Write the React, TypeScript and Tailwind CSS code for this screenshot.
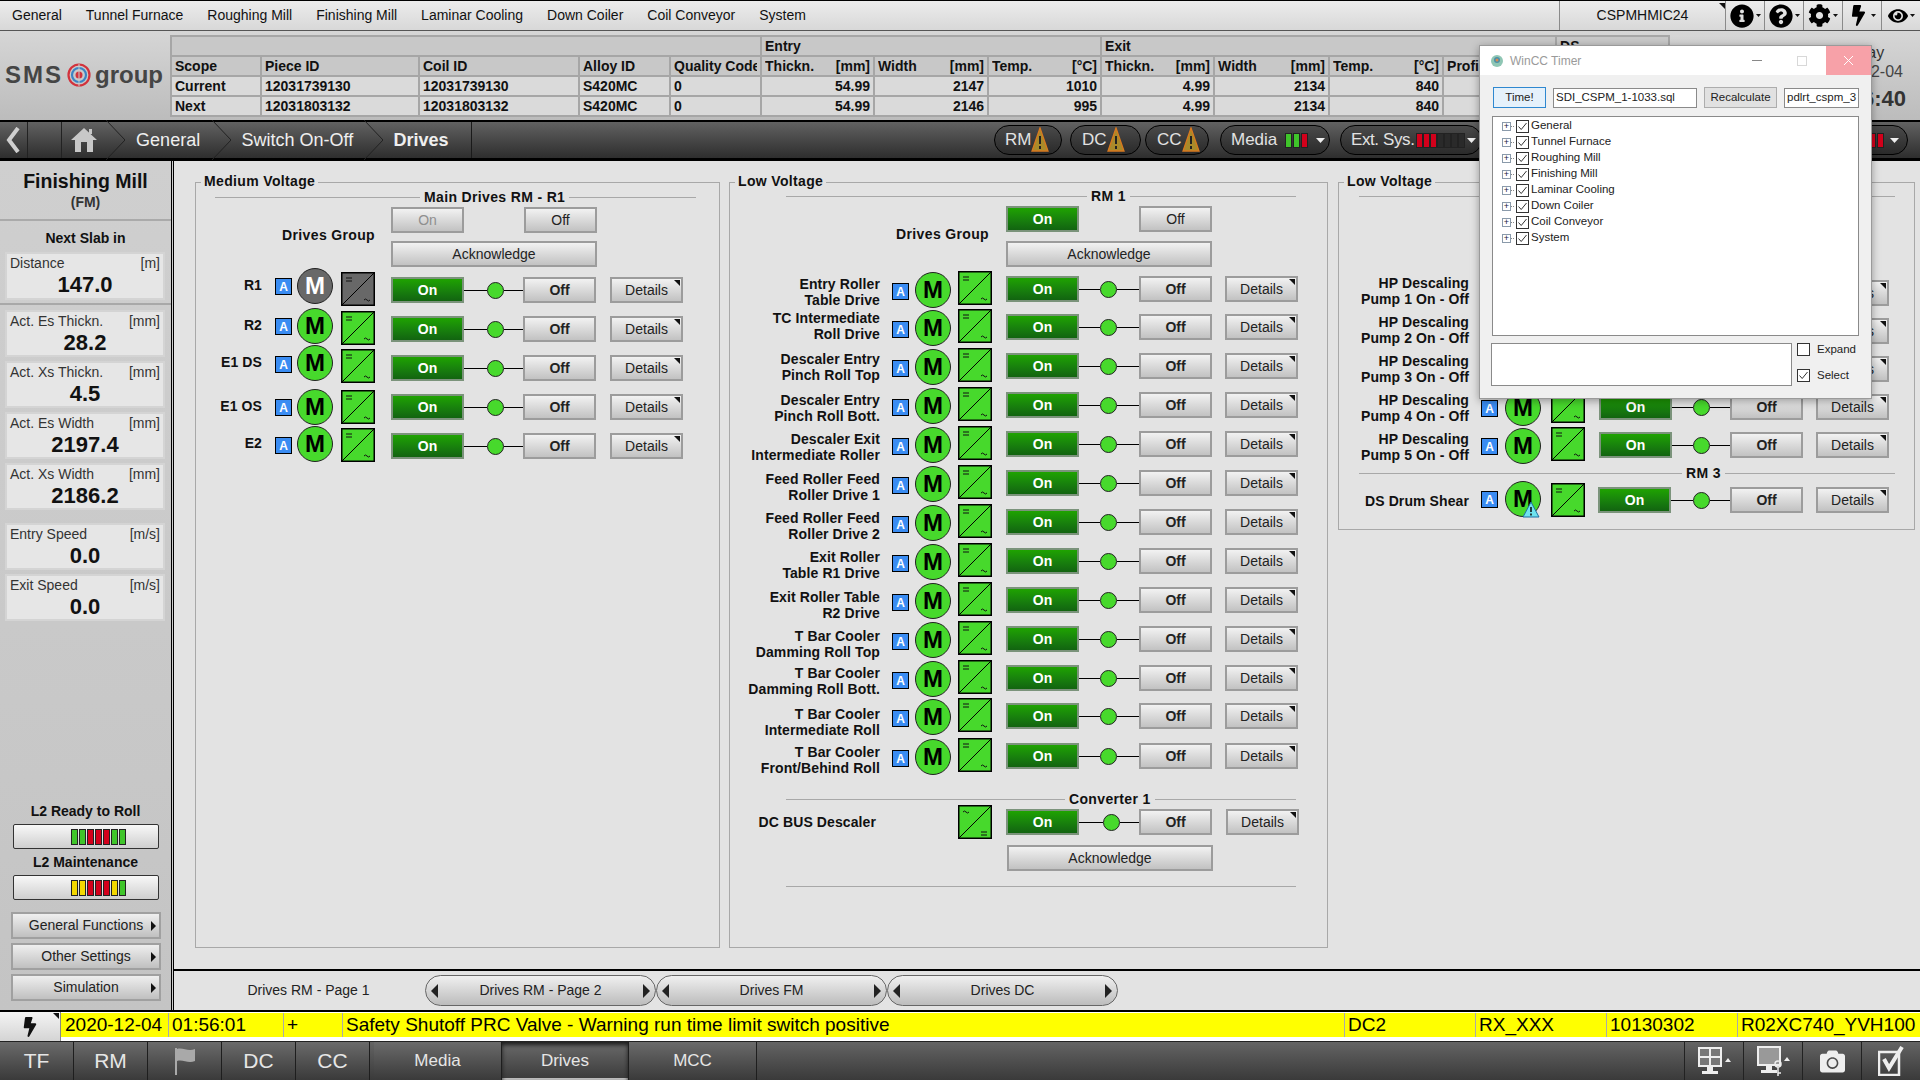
import React from "react";
import { FaInfoCircle, FaQuestionCircle, FaCog, FaBolt, FaEye, FaCamera } from "react-icons/fa";

const Btn = ({ cls = "", children }: { cls?: string; children?: React.ReactNode }) => (
  <div className={`relative flex items-center justify-center h-[26px] border-2 border-[#9c9c9c] bg-gradient-to-b from-[#f2f2f2] to-[#c2c2c2] text-[14px] text-[#222] ${cls}`}>
    {children}
  </div>
);

const OnBtn = ({ cls = "" }: { cls?: string }) => (
  <div className={`flex items-center justify-center w-[73px] h-[26px] border-2 border-[#7b937b] bg-gradient-to-b from-[#1fa300] to-[#126410] text-white font-bold text-[14px] ${cls}`}>
    On
  </div>
);

const Corner = () => (
  <svg className="absolute right-[1px] top-[1px]" width="7" height="7" viewBox="0 0 7 7">
    <path d="M1 0H7V6Z" fill="#111" />
  </svg>
);

const Motor = ({ gray, warn }: { gray?: boolean; warn?: boolean }) => (
  <div className={`relative w-[36px] h-[36px] rounded-full border-[1.5px] border-[#222] flex items-center justify-center font-bold text-[24px] leading-none ${gray ? "bg-[#686868] text-white" : "bg-[#47d92c] text-black"}`}>
    M
    {warn && (
      <svg className="absolute right-[0px] bottom-[-2px]" width="18" height="17" viewBox="0 0 18 17">
        <path d="M9 1L17 16H1Z" fill="#6fe3ee" stroke="#1c6fa5" strokeWidth="1" />
        <path d="M9 6V11M9 12.5V14.5" stroke="#111" strokeWidth="1.6" />
      </svg>
    )}
  </div>
);

const Conv = ({ gray, flip }: { gray?: boolean; flip?: boolean }) => (
  <svg width="34" height="34" viewBox="0 0 34 34" className="block shrink-0">
    <rect x="0.75" y="0.75" width="32.5" height="32.5" fill={gray ? "#686868" : "#47d92c"} stroke="#000" strokeWidth="1.5" />
    <path d="M1 33L33 1" stroke="#000" strokeWidth="1" />
    {flip ? (
      <>
        <path d="M5 7q1.500 -2 3 0t3 0" fill="none" stroke="#111" strokeWidth="1" />
        <path d="M23 27H29M23 30H29" stroke="#111" strokeWidth="1" />
      </>
    ) : (
      <>
        <path d="M5 6H11M5 9H11" stroke="#111" strokeWidth="1" />
        <path d="M23 28q1.500 -2 3 0t3 0" fill="none" stroke="#111" strokeWidth="1" />
      </>
    )}
  </svg>
);

const ABadge = () => (
  <div className="w-[17px] h-[17px] bg-[#3a8cf2] border border-black text-white font-bold text-[12px] flex items-center justify-center leading-none">A</div>
);

type RowP = {
  label?: React.ReactNode;
  rowH?: string;
  lw: string; aMl: string; mMl: string; cMl: string; onMl: string; dMl: string;
  connW: string; lead: string;
  lT?: string; aT?: string; mT?: string; cT?: string;
  gray?: boolean; warn?: boolean; noMotor?: boolean; flip?: boolean;
};

const Row = ({ label, rowH = "h-[39px]", lw, aMl, mMl, cMl, onMl, dMl, connW, lead, lT = "mt-[8px]", aT = "mt-[17px]", mT = "mt-[6px]", cT = "mt-[5px]", gray, warn, noMotor, flip }: RowP) => (
  <div className={`flex items-start shrink-0 ${rowH}`}>
    <div className={`${lw} ${lT} text-right font-bold text-[14px] leading-[16px] tracking-[0.1px] text-[#111] shrink-0 whitespace-nowrap`}>{label}</div>
    {noMotor ? (
      <div className={`${cMl} ${cT}`}><Conv flip={flip} /></div>
    ) : (
      <>
        <div className={`${aMl} ${aT}`}><ABadge /></div>
        <div className={`${mMl} ${mT}`}><Motor gray={gray} warn={warn} /></div>
        <div className={`${cMl} ${cT}`}><Conv gray={gray} /></div>
      </>
    )}
    <OnBtn cls={`${onMl} mt-[10px] shrink-0`} />
    <div className={`${connW} h-[26px] mt-[10px] flex items-center shrink-0`}>
      <div className={`${lead} h-px bg-black`} />
      <div className="w-[17px] h-[17px] rounded-full bg-[#47d92c] border border-[#222] shrink-0" />
      <div className="flex-1 h-px bg-black" />
    </div>
    <Btn cls="w-[73px] mt-[10px] font-bold shrink-0">Off</Btn>
    <Btn cls={`w-[73px] ${dMl} mt-[10px] shrink-0`}>Details<Corner /></Btn>
  </div>
);

const Heading = ({ text, cls, lead }: { text: string; cls: string; lead: string }) => (
  <div className={`flex items-center h-[16px] shrink-0 ${cls}`}>
    <div className={`${lead} h-px bg-[#a8a8a8] shrink-0`} />
    <div className="px-[4px] font-bold text-[14px] tracking-[0.35px] text-[#111] whitespace-nowrap">{text}</div>
    <div className="flex-1 h-px bg-[#a8a8a8]" />
  </div>
);

const Legend = ({ text }: { text: string }) => (
  <div className="-mt-[12px] h-[20px] ml-[5px] shrink-0 flex">
    <div className="bg-[#e3e3e3] px-[3px] font-bold text-[14px] tracking-[0.35px] leading-[20px] text-[#111]">{text}</div>
  </div>
);

const b1 = { lw: "w-[66px]", aMl: "ml-[13px]", mMl: "ml-[5px]", cMl: "ml-[8px]", onMl: "ml-[16px]", dMl: "ml-[14px]", connW: "w-[59px]", lead: "w-[23px]" };
const b2 = { lw: "w-[150px]", aMl: "ml-[12px]", mMl: "ml-[6px]", cMl: "ml-[7px]", onMl: "ml-[14px]", dMl: "ml-[13px]", connW: "w-[60px]", lead: "w-[21px]" };
const b3 = { lw: "w-[130px]", aMl: "ml-[12px]", mMl: "ml-[7px]", cMl: "ml-[10px]", onMl: "ml-[14px]", dMl: "ml-[13px]", connW: "w-[58px]", lead: "w-[21px]" };

const lines = (a: string, b: string) => (<>{a}<br />{b}</>);

const rows1 = [
  { label: "R1", gray: true, rowH: "h-[39px]", lT: "mt-[10px]", mT: "mt-[1px]", cT: "mt-[5px]", aT: "mt-[11px]" },
  { label: "R2", rowH: "h-[39px]", lT: "mt-[11px]", mT: "mt-[2px]", cT: "mt-[5px]", aT: "mt-[12px]" },
  { label: "E1 DS", rowH: "h-[39px]", lT: "mt-[9px]", mT: "mt-[0px]", cT: "mt-[4px]", aT: "mt-[11px]" },
  { label: "E1 OS", rowH: "h-[39px]", lT: "mt-[14px]", mT: "mt-[5px]", cT: "mt-[6px]", aT: "mt-[15px]" },
  { label: "E2", rowH: "h-[39px]", lT: "mt-[12px]", mT: "mt-[3px]", cT: "mt-[5px]", aT: "mt-[14px]" },
];

const rows2 = [
  { label: lines("Entry Roller", "Table Drive"), rowH: "h-[38px]", lT: "mt-[10px]" },
  { label: lines("TC Intermediate", "Roll Drive"), rowH: "h-[39px]", lT: "mt-[6px]" },
  { label: lines("Descaler Entry", "Pinch Roll Top"), rowH: "h-[39px]", lT: "mt-[8px]" },
  { label: lines("Descaler Entry", "Pinch Roll Bott."), rowH: "h-[39px]", lT: "mt-[10px]" },
  { label: lines("Descaler Exit", "Intermediate Roller"), rowH: "h-[39px]", lT: "mt-[10px]" },
  { label: lines("Feed Roller Feed", "Roller Drive 1"), rowH: "h-[39px]", lT: "mt-[11px]" },
  { label: lines("Feed Roller Feed", "Roller Drive 2"), rowH: "h-[39px]", lT: "mt-[11px]" },
  { label: lines("Exit Roller", "Table R1 Drive"), rowH: "h-[39px]", lT: "mt-[11px]" },
  { label: lines("Exit Roller Table", "R2 Drive"), rowH: "h-[39px]", lT: "mt-[12px]" },
  { label: lines("T Bar Cooler", "Damming Roll Top"), rowH: "h-[39px]", lT: "mt-[12px]" },
  { label: lines("T Bar Cooler", "Damming Roll Bott."), rowH: "h-[38px]", lT: "mt-[10px]" },
  { label: lines("T Bar Cooler", "Intermediate Roll"), rowH: "h-[40px]", lT: "mt-[13px]" },
  { label: lines("T Bar Cooler", "Front/Behind Roll"), rowH: "h-[39px]", lT: "mt-[11px]" },
];

const pumps = [
  { n: 1, lT: "mt-[5px]" },
  { n: 2, lT: "mt-[6px]" },
  { n: 3, lT: "mt-[7px]" },
  { n: 4, lT: "mt-[8px]" },
  { n: 5, lT: "mt-[9px]" },
];

const StatBox = ({ label, unit, value, cls = "" }: { label: string; unit: string; value: string; cls?: string }) => (
  <div className={`mx-[5px] w-[160px] h-[47px] border-2 border-[#d4d4d4] bg-[#e6e6e6] px-[3px] flex flex-col shrink-0 ${cls}`}>
    <div className="flex justify-between text-[14px] leading-[18px] text-[#333]"><span>{label}</span><span>{unit}</span></div>
    <div className="text-center font-bold text-[22px] leading-[25px] text-[#111]">{value}</div>
  </div>
);

const Leds = ({ colors, w = "w-[7px]", h = "h-[16px]", gap = "gap-[1px]" }: { colors: string[]; w?: string; h?: string; gap?: string }) => (
  <div className={`flex shrink-0 ${gap}`}>
    {colors.map((c, i) => (
      <div key={i} className={`${w} ${h} ${c} border border-[#222]`} />
    ))}
  </div>
);
const G = "bg-[#3fc52a]", R = "bg-[#d3001b]", Y = "bg-[#f4d800]", K = "bg-[#2a2a2a]";

const SideBtn = ({ text }: { text: string }) => (
  <div className="relative mx-[11px] w-[150px] h-[27px] border-2 border-[#a0a0a0] bg-gradient-to-b from-[#efefef] to-[#c0c0c0] flex items-center justify-center text-[14px] text-[#222] shrink-0">
    {text}
    <svg className="absolute right-[3px] top-[7px]" width="5" height="10" viewBox="0 0 5 10"><path d="M0 0L5 5L0 10Z" fill="#111" /></svg>
  </div>
);

const Warn = () => (
  <svg width="18" height="26" viewBox="0 0 18 26" className="block shrink-0">
    <path d="M9 1L17 24H1Z" fill="#a98a2a" stroke="#d9791f" strokeWidth="1.300" />
    <path d="M9 9V17M9 19V22" stroke="#222" strokeWidth="2" />
  </svg>
);

const Caret = () => (
  <svg width="9" height="5" viewBox="0 0 9 5" className="shrink-0"><path d="M0 0H9L4.500 5Z" fill="#eee" /></svg>
);

const Pill = ({ cls, children }: { cls: string; children: React.ReactNode }) => (
  <div className={`h-[30px] rounded-full border border-black bg-gradient-to-b from-[#4a4a4a] to-[#2a2a2a] flex items-center whitespace-nowrap text-[17px] text-[#e2e2e2] shrink-0 ${cls}`}>
    {children}
  </div>
);

const Chev = () => (
  <svg width="19" height="40" viewBox="0 0 19 40" className="block shrink-0">
    <path d="M0 0L19 20L0 40" fill="none" stroke="#222" strokeWidth="1" />
  </svg>
);

const TopIcon = ({ children }: { children: React.ReactNode }) => (
  <div className="relative w-[39px] h-full border-l border-[#8a8a8a] flex items-center justify-center gap-[2px] text-black shrink-0">
    {children}
    <svg width="5" height="3" viewBox="0 0 5 3"><path d="M0 0H5L2.500 3Z" fill="#111" /></svg>
  </div>
);

const PageTab = ({ text, cls = "" }: { text: string; cls?: string }) => (
  <div className={`h-[31px] w-[231px] rounded-full border border-[#666] bg-gradient-to-b from-[#f0f0f0] to-[#bcbcbc] flex items-center justify-between px-[5px] text-[14px] text-[#222] shrink-0 ${cls}`}>
    <svg width="7" height="14" viewBox="0 0 7 14"><path d="M7 0V14L0 7Z" fill="#222" /></svg>
    {text}
    <svg width="7" height="14" viewBox="0 0 7 14"><path d="M0 0V14L7 7Z" fill="#222" /></svg>
  </div>
);

const BottomTab = ({ children, cls = "" }: { children: React.ReactNode; cls?: string }) => (
  <div className={`h-full flex items-center justify-center text-[#e6e6e6] bg-gradient-to-b from-[#6b6b6b] to-[#3a3a3a] border-r border-[#1e1e1e] shrink-0 ${cls}`}>
    {children}
  </div>
);

const Th = ({ a, b, span = 1 }: { a: string; b?: string; span?: number }) => (
  <th colSpan={span} className="border-2 border-[#a6a6a6] bg-[#c8c8c8] px-[3px] py-0 font-bold text-[14px] leading-[16px] text-[#111] h-[20px] overflow-hidden whitespace-nowrap text-left">
    <div className="flex justify-between overflow-hidden"><span>{a}</span>{b && <span>{b}</span>}</div>
  </th>
);
const Td = ({ v, right }: { v: string; right?: boolean }) => (
  <td className={`border-2 border-[#a6a6a6] bg-[#dadada] px-[3px] py-0 font-bold text-[14px] leading-[16px] text-[#111] h-[20px] whitespace-nowrap ${right ? "text-right" : "text-left"}`}>{v}</td>
);

const colW = ["w-[90px]", "w-[158px]", "w-[160px]", "w-[91px]", "w-[91px]", "w-[113px]", "w-[114px]", "w-[113px]", "w-[113px]", "w-[115px]", "w-[114px]", "w-[113px]", "w-[113px]"];

const tree = ["General", "Tunnel Furnace", "Roughing Mill", "Finishing Mill", "Laminar Cooling", "Down Coiler", "Coil Conveyor", "System"];

const Check = ({ on = true }: { on?: boolean }) => (
  <svg width="13" height="13" viewBox="0 0 13 13" className="block shrink-0">
    <rect x="0.500" y="0.500" width="12" height="12" fill="#fff" stroke="#333" />
    {on && <path d="M2.500 6.500L5.200 9.500L10.500 3" fill="none" stroke="#333" strokeWidth="1" />}
  </svg>
);

export default function App() {
  return (
    <div className="relative w-[1920px] h-[1080px] overflow-hidden flex flex-col bg-[#e3e3e3] font-['Liberation_Sans',Arial,sans-serif]">
      {/* top menu */}
      <div className="h-[31px] shrink-0 border-t border-black border-b border-b-[#555] bg-gradient-to-b from-[#ececec] to-[#d8d8d8] flex items-center text-[14px] text-[#111]">
        <div className="flex w-[1559px] pl-[12px] gap-[24px] shrink-0 whitespace-nowrap">
          {["General", "Tunnel Furnace", "Roughing Mill", "Finishing Mill", "Laminar Cooling", "Down Coiler", "Coil Conveyor", "System"].map((t) => <span key={t}>{t}</span>)}
        </div>
        <div className="relative w-[166px] h-full border-l border-[#8a8a8a] flex items-center justify-center shrink-0">
          CSPMHMIC24
          <svg className="absolute right-0 top-[2px]" width="6" height="6" viewBox="0 0 6 6"><path d="M0 0H6V6Z" fill="#111" /></svg>
        </div>
        <TopIcon><FaInfoCircle size={24} /></TopIcon>
        <TopIcon><FaQuestionCircle size={24} /></TopIcon>
        <TopIcon><FaCog size={23} /></TopIcon>
        <TopIcon><FaBolt size={21} /></TopIcon>
        <TopIcon><FaEye size={20} /></TopIcon>
      </div>

      {/* header */}
      <div className="h-[89px] shrink-0 flex bg-gradient-to-b from-[#d6d6d6] to-[#bcbcbc]">
        <div className="w-[170px] shrink-0 pl-[5px] flex items-center h-[88px] gap-[4px] font-bold text-[#454545] text-[24px]">
          <span className="tracking-[2px] leading-none">SMS</span>
          <svg width="24" height="24" viewBox="0 0 24 24" className="shrink-0">
            <circle cx="12" cy="12" r="10.500" fill="none" stroke="#d2323c" strokeWidth="2.200" />
            <circle cx="12" cy="12" r="7" fill="none" stroke="#3b84c4" strokeWidth="2.200" />
            <circle cx="12" cy="12" r="3.500" fill="#d2323c" />
            <path d="M12 1V23" stroke="#c8c8c8" strokeWidth="1" />
          </svg>
          <span className="leading-none">group</span>
        </div>
        <div className="mt-[4px] shrink-0">
          <table className="table-fixed border-collapse w-[1498px]">
            <colgroup>{colW.map((w, i) => <col key={i} className={w} />)}</colgroup>
            <tbody>
              <tr>
                <Th a="" span={5} />
                <Th a="Entry" span={3} />
                <Th a="Exit" span={4} />
                <Th a="DS" />
              </tr>
              <tr>
                <Th a="Scope" /><Th a="Piece ID" /><Th a="Coil ID" /><Th a="Alloy ID" /><Th a="Quality Code" />
                <Th a="Thickn." b="[mm]" /><Th a="Width" b="[mm]" /><Th a="Temp." b="[°C]" />
                <Th a="Thickn." b="[mm]" /><Th a="Width" b="[mm]" /><Th a="Temp." b="[°C]" /><Th a="Profile" /><Th a="" />
              </tr>
              <tr>
                <Td v="Current" /><Td v="12031739130" /><Td v="12031739130" /><Td v="S420MC" /><Td v="0" />
                <Td v="54.99" right /><Td v="2147" right /><Td v="1010" right /><Td v="4.99" right /><Td v="2134" right /><Td v="840" right /><Td v="" /><Td v="" />
              </tr>
              <tr>
                <Td v="Next" /><Td v="12031803132" /><Td v="12031803132" /><Td v="S420MC" /><Td v="0" />
                <Td v="54.99" right /><Td v="2146" right /><Td v="995" right /><Td v="4.99" right /><Td v="2134" right /><Td v="840" right /><Td v="" /><Td v="" />
              </tr>
            </tbody>
          </table>
        </div>
        <div className="w-[120px] ml-[132px] shrink-0 flex flex-col items-center text-[#333] pt-[12px] whitespace-nowrap">
          <div className="text-[16px] leading-[20px]">Friday</div>
          <div className="text-[16px] leading-[18px] text-[#444]">2020-12-04</div>
          <div className="text-[22px] leading-[30px] mt-[3px] font-bold">01:56:40</div>
        </div>
      </div>

      {/* breadcrumb */}
      <div className="h-[41px] shrink-0 border-t-2 border-b-[3px] border-black bg-gradient-to-b from-[#626262] to-[#2e2e2e] flex items-center">
        <div className="w-[472px] h-full flex items-center border-r border-[#1a1a1a] text-[18px] text-[#efefef] shrink-0">
          <div className="w-[28px] h-full flex items-center justify-center border-r border-[#222]">
            <svg width="14" height="26" viewBox="0 0 14 26"><path d="M12 1L3 13L12 25" fill="none" stroke="#cfcfcf" strokeWidth="4" /></svg>
          </div>
          <div className="w-[34px] h-full border-r border-[#222]" />
          <div className="w-[44px] h-full flex items-center justify-center">
            <svg width="26" height="26" viewBox="0 0 26 26">
              <path d="M13 1L26 13H22V25H16V15H10V25H4V13H0Z" fill="#c8c8c8" />
              <path d="M18 2H21V7H18Z" fill="#c8c8c8" />
            </svg>
          </div>
          <Chev />
          <div className="w-[87px] text-center">General</div>
          <Chev />
          <div className="w-[134px] text-center">Switch On-Off</div>
          <Chev />
          <div className="w-[88px] pr-[12px] text-center font-bold">Drives</div>
        </div>
        <div className="flex items-center ml-[522px]">
          <Pill cls="w-[68px] pl-[10px]">RM<Warn /></Pill>
          <Pill cls="w-[71px] pl-[11px] ml-[8px]">DC<Warn /></Pill>
          <Pill cls="w-[64px] pl-[11px] ml-[4px]">CC<Warn /></Pill>
          <Pill cls="w-[110px] pl-[10px] ml-[11px] gap-[8px]">Media<Leds colors={[G, G, R]} w="w-[7px]" h="h-[15px]" /><Caret /></Pill>
          <Pill cls="w-[142px] pl-[10px] ml-[10px] gap-[2px] tracking-[-0.4px]">Ext. Sys.<Leds colors={[R, R, R, K, K, K, K]} w="w-[7px]" h="h-[15px]" gap="gap-0" /><Caret /></Pill>
          <Pill cls="w-[418px] pr-[8px] ml-[8px] justify-end gap-[6px]"><Leds colors={[R, R]} w="w-[7px]" h="h-[15px]" /><Caret /></Pill>
        </div>
      </div>

      {/* middle */}
      <div className="h-[849px] shrink-0 flex">
        <div className="w-[171px] h-full shrink-0 flex flex-col bg-gradient-to-b from-[#cfcfcf] to-[#c4c4c4] text-[#111]">
          <div className="h-[60px] shrink-0 border-b-2 border-[#aaaaaa] flex flex-col items-center pt-[8px]">
            <div className="font-bold text-[19.5px] leading-[24px]">Finishing Mill</div>
            <div className="font-bold text-[14px] leading-[18px] text-[#333]">(FM)</div>
          </div>
          <div className="h-[31px] pt-[3px] shrink-0 flex items-center justify-center font-bold text-[14px]">Next Slab in</div>
          <StatBox label="Distance" unit="[m]" value="147.0" cls="h-[48px]" />
          <div className="mt-[3px] h-[2px] bg-[#a8a8a8] shrink-0" />
          <StatBox label="Act. Es Thickn." unit="[mm]" value="28.2" cls="mt-[5px]" />
          <StatBox label="Act. Xs Thickn." unit="[mm]" value="4.5" cls="mt-[4px]" />
          <StatBox label="Act. Es Width" unit="[mm]" value="2197.4" cls="mt-[4px]" />
          <StatBox label="Act. Xs Width" unit="[mm]" value="2186.2" cls="mt-[4px]" />
          <StatBox label="Entry Speed" unit="[m/s]" value="0.0" cls="mt-[13px]" />
          <StatBox label="Exit Speed" unit="[m/s]" value="0.0" cls="mt-[4px]" />
          <div className="mt-auto flex flex-col pb-[9px]">
            <div className="h-[22px] pb-[4px] flex items-center justify-center font-bold text-[14px]">L2 Ready to Roll</div>
            <div className="mx-[13px] w-[146px] h-[25px] rounded-[2px] border-[1.5px] border-[#333] bg-gradient-to-b from-[#f8f8f8] to-[#cfcfcf] flex items-center pl-[57px]">
              <Leds colors={[G, G, R, R, R, G, G]} />
            </div>
            <div className="h-[26px] flex items-center justify-center font-bold text-[14px]">L2 Maintenance</div>
            <div className="mx-[13px] w-[146px] h-[25px] rounded-[2px] border-[1.5px] border-[#333] bg-gradient-to-b from-[#f8f8f8] to-[#cfcfcf] flex items-center pl-[57px]">
              <Leds colors={[Y, Y, R, R, R, Y, G]} />
            </div>
            <div className="mt-[12px] flex flex-col gap-[4px]">
              <SideBtn text="General Functions" />
              <SideBtn text="Other Settings" />
              <SideBtn text="Simulation" />
            </div>
          </div>
        </div>
        <div className="w-[3px] shrink-0 border-x border-black bg-[#cfcfcf]" />

        <div className="flex-1 flex flex-col min-w-0">
          <div className="h-[808px] shrink-0 flex items-start pt-[21px] pl-[21px]">
            {/* Box 1 */}
            <div className="w-[525px] h-[766px] shrink-0 border border-[#a8a8a8] flex flex-col">
              <Legend text="Medium Voltage" />
              <Heading text="Main Drives RM - R1" lead="w-[205px]" cls="-mt-[2px] ml-[19px] w-[481px]" />
              <div className="mt-[2px] h-[60px] flex items-start shrink-0">
                <div className="w-[179px] mt-[19px] text-right font-bold text-[14px] leading-[18px] tracking-[0.35px] text-[#111]">Drives Group</div>
                <div className="ml-[16px] w-[206px] flex flex-col gap-[8px]">
                  <div className="flex justify-between">
                    <Btn cls="w-[73px]"><span className="text-[#8f8f8f]">On</span></Btn>
                    <Btn cls="w-[73px]">Off</Btn>
                  </div>
                  <Btn cls="w-[206px]">Acknowledge</Btn>
                </div>
              </div>
              {rows1.map((r, i) => <Row key={i} {...b1} {...r} />)}
            </div>

            {/* Box 2 */}
            <div className="ml-[9px] w-[599px] h-[766px] shrink-0 border border-[#a8a8a8] flex flex-col">
              <Legend text="Low Voltage" />
              <Heading text="RM 1" lead="w-[301px]" cls="-mt-[3px] ml-[56px] w-[510px]" />
              <div className="mt-[2px] h-[60px] flex items-start shrink-0">
                <div className="w-[259px] mt-[19px] text-right font-bold text-[14px] leading-[18px] tracking-[0.35px] text-[#111]">Drives Group</div>
                <div className="ml-[17px] w-[206px] flex flex-col gap-[9px]">
                  <div className="flex justify-between">
                    <OnBtn />
                    <Btn cls="w-[73px]">Off</Btn>
                  </div>
                  <Btn cls="w-[206px]">Acknowledge</Btn>
                </div>
              </div>
              {rows2.map((r, i) => <Row key={i} {...b2} {...r} />)}
              <Heading text="Converter 1" lead="w-[279px]" cls="mt-[19px] ml-[56px] w-[510px]" />
              <div className="-mt-[8px]">
                <Row {...b2} label="DC BUS Descaler" lw="w-[146px]" noMotor flip cMl="ml-[82px]" onMl="ml-[14px]" dMl="ml-[14px]" lead="w-[24px]" lT="mt-[15px]" cT="mt-[6px]" />
              </div>
              <Btn cls="w-[206px] ml-[277px] mt-[7px] shrink-0">Acknowledge</Btn>
              <div className="mt-[15px] ml-[56px] w-[510px] h-px bg-[#a8a8a8] shrink-0" />
            </div>

            {/* Box 3 */}
            <div className="ml-[10px] w-[577px] h-[348px] shrink-0 border border-[#a8a8a8] flex flex-col">
              <Legend text="Low Voltage" />
              <Heading text="RM 2" lead="w-[260px]" cls="-mt-[3px] ml-[20px] w-[536px]" />
              <div className="h-[66px] shrink-0" />
              {pumps.map((p) => (
                <Row key={p.n} {...b3} rowH="h-[38px]" lT={p.lT} label={lines("HP Descaling", `Pump ${p.n} On - Off`)} aT="mt-[16px]" />
              ))}
              <Heading text="RM 3" lead="w-[323px]" cls="mt-[5px] ml-[20px] w-[536px]" />
              <div className="-mt-[4px]">
                <Row {...b3} label="DS Drum Shear" warn onMl="ml-[13px]" connW="w-[59px]" lead="w-[22px]" lT="mt-[16px]" mT="mt-[4px]" cT="mt-[6px]" aT="mt-[14px]" />
              </div>
            </div>
          </div>

          {/* page tabs */}
          <div className="h-[41px] shrink-0 border-t-2 border-black flex items-start pt-[4px]">
            <div className="w-[251px] pl-[18px] h-[31px] flex items-center justify-center text-[14px] text-[#222] shrink-0">Drives RM - Page 1</div>
            <PageTab text="Drives RM - Page 2" />
            <PageTab text="Drives FM" />
            <PageTab text="Drives DC" />
          </div>
        </div>
      </div>

      {/* alarm */}
      <div className="h-[31px] shrink-0 border-t-2 border-black bg-white flex items-start">
        <div className="relative w-[61px] h-[29px] bg-gradient-to-b from-[#f4f4f4] to-[#d4d4d4] border-r border-[#888] flex items-center justify-center shrink-0">
          <FaBolt size={20} className="text-[#111]" />
          <svg className="absolute right-[1px] top-[1px]" width="6" height="6" viewBox="0 0 6 6"><path d="M0 0H6V6Z" fill="#111" /></svg>
        </div>
        <div className="flex h-[24px] mt-[1px] bg-[#ffff00] text-[19px] leading-[23px] text-black whitespace-nowrap overflow-hidden">
          <div className="w-[108px] pl-[4px] border-r border-[#aaa]">2020-12-04</div>
          <div className="w-[115px] pl-[3px] border-r border-[#aaa]">01:56:01</div>
          <div className="w-[59px] pl-[3px] border-r border-[#aaa]">+</div>
          <div className="w-[1002px] pl-[3px] border-r border-[#aaa]">Safety Shutoff PRC Valve - Warning run time limit switch positive</div>
          <div className="w-[131px] pl-[3px] border-r border-[#aaa]">DC2</div>
          <div className="w-[131px] pl-[3px] border-r border-[#aaa]">RX_XXX</div>
          <div className="w-[131px] pl-[3px] border-r border-[#aaa]">10130302</div>
          <div className="w-[182px] pl-[3px] overflow-hidden">R02XC740_YVH100</div>
        </div>
      </div>

      {/* bottom */}
      <div className="h-[39px] shrink-0 border-t border-[#222] bg-gradient-to-b from-[#646464] to-[#3a3a3a] flex">
        {["TF", "RM"].map((t) => <BottomTab key={t} cls="w-[74px] text-[21px]">{t}</BottomTab>)}
        <BottomTab cls="w-[74px]">
          <svg width="22" height="28" viewBox="0 0 22 28"><path d="M2 1V28" stroke="#a9a9a9" strokeWidth="2" /><path d="M3 2C9 0 14 5 21 2V14C14 17 9 12 3 14Z" fill="#a9a9a9" /></svg>
        </BottomTab>
        {["DC", "CC"].map((t) => <BottomTab key={t} cls="w-[74px] text-[21px]">{t}</BottomTab>)}
        <div className="w-[4px] shrink-0" />
        <BottomTab cls="w-[128px] text-[17px]">Media</BottomTab>
        <BottomTab cls="w-[127px] text-[17px] shadow-[inset_0_3px_4px_#1c1c1c,inset_0_-2px_0_#bdbdbd]">Drives</BottomTab>
        <BottomTab cls="w-[128px] text-[17px]">MCC</BottomTab>
        <div className="flex-1" />
        <div className="w-[59px] border-l border-[#222] flex items-center justify-center">
          <svg width="34" height="30" viewBox="0 0 34 30">
            <path d="M1 1H25V21H1Z" fill="#eee" />
            <path d="M3 3H12V10H3ZM14 3H23V10H14ZM3 12H12V19H3ZM14 12H23V19H14Z" fill="#777" />
            <path d="M10 21H16V25H21V28H5V25H10Z" fill="#eee" />
            <path d="M28 16L31 12L34 16Z" fill="#eee" />
          </svg>
        </div>
        <div className="w-[59px] border-l border-[#222] flex items-center justify-center">
          <svg width="34" height="32" viewBox="0 0 34 32">
            <path d="M1 1H25V21H1Z" fill="#eee" />
            <path d="M3 3H23V19H3Z" fill="#999" />
            <path d="M10 21H16V25H21V28H5V25H10Z" fill="#eee" />
            <circle cx="22" cy="19" r="3" fill="none" stroke="#eee" strokeWidth="1.500" />
            <path d="M22 22V31M22 28H25" stroke="#eee" strokeWidth="1.500" />
            <path d="M28 16L31 12L34 16Z" fill="#eee" />
          </svg>
        </div>
        <div className="w-[59px] border-l border-[#222] flex items-center justify-center"><FaCamera size={25} className="text-[#eee]" /></div>
        <div className="w-[59px] border-l border-[#222] flex items-center justify-center">
          <svg width="26" height="30" viewBox="0 0 26 30">
            <path d="M1 6H21V29H1Z" fill="none" stroke="#eee" strokeWidth="2.500" />
            <path d="M6 13L11 22L24 1" fill="none" stroke="#eee" strokeWidth="4" />
          </svg>
        </div>
      </div>

      {/* WinCC Timer window */}
      <div className="absolute left-[1479px] top-[45px] w-[393px] h-[354px] bg-[#f0f0f0] border border-[#9a9a9a] shadow-[0_2px_8px_rgba(0,0,0,0.35)] flex flex-col text-[11.5px] text-[#222]">
        <div className="h-[29px] bg-white flex items-center shrink-0">
          <svg className="ml-[10px]" width="14" height="14" viewBox="0 0 14 14">
            <circle cx="7" cy="7" r="6" fill="#8fc6b4" />
            <circle cx="7" cy="6" r="3" fill="#4b8fa8" />
            <circle cx="7" cy="6" r="1.500" fill="#d88a52" />
          </svg>
          <span className="ml-[6px] text-[12px] text-[#9a9a9a]">WinCC Timer</span>
          <div className="ml-auto flex items-center h-full">
            <div className="w-[10px] h-px bg-[#888] mr-[35px]" />
            <div className="w-[10px] h-[10px] border border-[#d8d8d8] mr-[19px]" />
            <div className="w-[45px] h-full bg-[#f7a1a8] flex items-center justify-center">
              <svg width="11" height="11" viewBox="0 0 11 11"><path d="M1 1L10 10M10 1L1 10" stroke="#fff" strokeWidth="1" /></svg>
            </div>
          </div>
        </div>
        <div className="flex items-center mt-[12px] ml-[13px] shrink-0">
          <div className="w-[53px] h-[21px] border border-[#2f88d0] bg-[#e5f1fb] flex items-center justify-center">Time!</div>
          <div className="ml-[7px] w-[144px] h-[20px] border border-[#8a8a8a] bg-white pl-[2px] flex items-center whitespace-nowrap">SDI_CSPM_1-1033.sql</div>
          <div className="ml-[7px] w-[73px] h-[21px] border border-[#adadad] bg-[#e1e1e1] flex items-center justify-center">Recalculate</div>
          <div className="ml-[7px] w-[75px] h-[20px] border border-[#8a8a8a] bg-white pl-[2px] flex items-center whitespace-nowrap overflow-hidden">pdlrt_cspm_3</div>
        </div>
        <div className="ml-[12px] mt-[8px] w-[367px] h-[220px] border border-[#8a8a8a] bg-white pl-[9px] pt-[1px] shrink-0">
          {tree.map((t) => (
            <div key={t} className="flex items-center h-[16px]">
              <div className="w-[9px] h-[9px] border border-[#8a9aaa] flex items-center justify-center text-[#224] text-[9px] leading-none shrink-0">+</div>
              <div className="w-[3px] border-t border-dotted border-[#888] mr-[2px]" />
              <Check />
              <span className="ml-[2px] whitespace-nowrap">{t}</span>
            </div>
          ))}
        </div>
        <div className="flex mt-[7px] ml-[11px] shrink-0">
          <div className="w-[301px] h-[43px] border border-[#8a8a8a] bg-white" />
          <div className="ml-[5px] flex flex-col gap-[13px]">
            <div className="flex items-center gap-[7px] h-[13px]"><Check on={false} /><span>Expand</span></div>
            <div className="flex items-center gap-[7px] h-[13px]"><Check /><span>Select</span></div>
          </div>
        </div>
      </div>
    </div>
  );
}
